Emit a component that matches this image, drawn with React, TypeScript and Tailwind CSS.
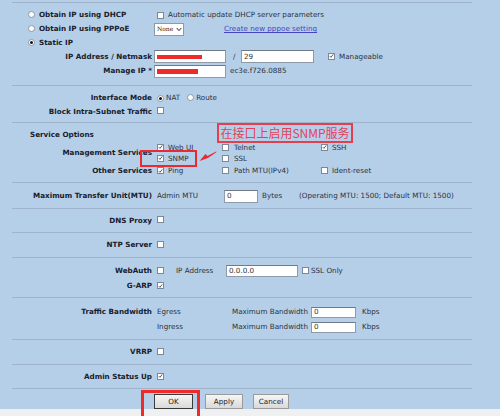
import type { ReactNode } from "react";

// small form controls drawn to the size used in the screenshot
function Check({ on = false }: { on?: boolean }) {
  return (
    <span className="inline-flex w-[7px] h-[7px] shrink-0 items-center justify-center border border-[#7d8896] bg-white">
      {on && (
        <svg viewBox="0 0 8 8" className="w-[6px] h-[6px]">
          <path d="M1.2 4.2 L3.1 6.2 L6.8 1.4" fill="none" stroke="#222" strokeWidth="1.2" />
        </svg>
      )}
    </span>
  );
}

function Radio({ on = false }: { on?: boolean }) {
  return (
    <span className="inline-flex w-[7px] h-[7px] shrink-0 items-center justify-center rounded-full border border-[#8d97a3] bg-white">
      {on && <span className="w-[3px] h-[3px] rounded-full bg-[#111]" />}
    </span>
  );
}

function Field({ w, h = "h-[13px]", children }: { w: string; h?: string; children?: ReactNode }) {
  return (
    <div className={`${w} ${h} shrink-0 flex items-center pl-[2px] bg-white border border-[#8e9aa8] border-t-[#6f7a86] text-[#333]`}>
      {children}
    </div>
  );
}

function Line() {
  return (
    <div className="mx-[12px] w-[460px]">
      <div className="h-px bg-[#9fb3ca]" />
    </div>
  );
}

function Label({ children }: { children: ReactNode }) {
  return <div className="w-[152px] shrink-0 text-right font-bold text-[#18202c]">{children}</div>;
}

export default function App() {
  return (
    <div
      className="relative w-[500px] h-[416px] overflow-hidden bg-[#b6cfe9] text-[7.2px] leading-none text-[#2b323c] whitespace-nowrap flex flex-col"
      style={{ fontFamily: '"DejaVu Sans", Verdana, sans-serif' }}
    >
      <div className="h-[2px]" />
      <Line />

      {/* IP mode */}
      <div className="mt-[5px] flex flex-col">
        <div className="h-[14px] flex items-center">
          <div className="w-[157px] shrink-0 flex items-center gap-[4px] pl-[28px] font-bold text-[#18202c]">
            <Radio />
            <span>Obtain IP using DHCP</span>
          </div>
          <Check />
          <span className="ml-[4px]">Automatic update DHCP server parameters</span>
        </div>
        <div className="h-[14px] flex items-center">
          <div className="w-[154px] shrink-0 flex items-center gap-[4px] pl-[28px] font-bold text-[#18202c]">
            <Radio />
            <span>Obtain IP using PPPoE</span>
          </div>
          <div className="w-[30px] h-[13px] flex items-center justify-between pl-[2px] pr-[1px] bg-white border border-[#8e9aa8] text-[#222]">
            <span style={{ fontFamily: '"DejaVu Serif", serif' }} className="text-[6px]">None</span>
            <svg viewBox="0 0 8 6" className="w-[6px] h-[5px]">
              <path d="M1 1 L4 4.5 L7 1" fill="none" stroke="#222" strokeWidth="1.3" />
            </svg>
          </div>
          <span className="ml-[40px] text-[#4545c0] underline">Create new pppoe setting</span>
        </div>
        <div className="h-[13px] flex items-center">
          <div className="flex items-center gap-[4px] pl-[28px] font-bold text-[#18202c]">
            <Radio on />
            <span>Static IP</span>
          </div>
        </div>
        <div className="h-[15px] flex items-center">
          <Label>IP Address / Netmask</Label>
          <div className="ml-[2px]">
            <Field w="w-[72px]">
              <span className="w-[45px] h-[4px] bg-[#ee2b2b]" />
            </Field>
          </div>
          <span className="ml-[7px] w-[8px]">/</span>
          <Field w="w-[73px]">29</Field>
          <span className="ml-[14px]">
            <Check on />
          </span>
          <span className="ml-[4px]">Manageable</span>
        </div>
        <div className="h-[14px] flex items-center">
          <Label>Manage IP *</Label>
          <div className="ml-[2px]">
            <Field w="w-[72px]">
              <span className="w-[41px] h-[5px] bg-[#ee2b2b]" />
            </Field>
          </div>
          <span className="ml-[4px]">ec3e.f726.0885</span>
        </div>
      </div>
      <div className="h-[7px]" />
      <Line />

      {/* interface mode */}
      <div className="mt-[5px] flex flex-col">
        <div className="h-[14px] flex items-center">
          <Label>Interface Mode</Label>
          <span className="ml-[5px]">
            <Radio on />
          </span>
          <span className="ml-[2px]">NAT</span>
          <span className="ml-[7px]">
            <Radio />
          </span>
          <span className="ml-[2px]">Route</span>
        </div>
        <div className="h-[13px] flex items-center">
          <Label>Block Intra-Subnet Traffic</Label>
          <span className="ml-[5px]">
            <Check />
          </span>
        </div>
      </div>
      <div className="h-[4px]" />
      <Line />

      {/* services */}
      <div className="mt-[5px] flex flex-col">
        <div className="h-[14px] flex items-center pl-[30px] font-bold text-[#18202c]">Service Options</div>
        <div className="flex">
          <div className="w-[152px] shrink-0 h-[21px] flex items-center justify-end font-bold text-[#18202c]">Management Services</div>
          <div className="ml-[5px] grid grid-cols-[65px_99px_80px] grid-rows-[11px_11px] items-center">
            <div className="flex items-center gap-[4px]"><Check on />Web UI</div>
            <div className="flex items-center gap-[5px]"><Check />Telnet</div>
            <div className="flex items-center gap-[4px]"><Check on />SSH</div>
            <div className="flex items-center gap-[4px]"><Check on />SNMP</div>
            <div className="flex items-center gap-[5px]"><Check />SSL</div>
            <div />
          </div>
        </div>
        <div className="h-[14px] flex items-center">
          <Label>Other Services</Label>
          <div className="ml-[5px] grid grid-cols-[65px_99px_80px] items-center">
            <div className="flex items-center gap-[4px]"><Check on />Ping</div>
            <div className="flex items-center gap-[5px]"><Check />Path MTU(IPv4)</div>
            <div className="flex items-center gap-[4px]"><Check />Ident-reset</div>
          </div>
        </div>
      </div>
      <div className="h-[4px]" />
      <Line />

      {/* MTU */}
      <div className="mt-[6px] h-[14px] flex items-center">
        <Label>Maximum Transfer Unit(MTU)</Label>
        <span className="ml-[5px] w-[67px]">Admin MTU</span>
        <Field w="w-[34px]">0</Field>
        <span className="ml-[4px] w-[37px]">Bytes</span>
        <span>(Operating MTU: 1500; Default MTU: 1500)</span>
      </div>
      <div className="h-[5px]" />
      <Line />

      <div className="h-[23px] flex items-center">
        <Label>DNS Proxy</Label>
        <span className="ml-[5px]"><Check /></span>
      </div>
      <Line />

      <div className="h-[24px] flex items-center">
        <Label>NTP Server</Label>
        <span className="ml-[5px]"><Check /></span>
      </div>
      <Line />

      {/* web auth */}
      <div className="pt-[7px] pb-[5px] flex flex-col gap-[3px]">
        <div className="h-[12px] flex items-center">
          <Label>WebAuth</Label>
          <span className="ml-[5px]"><Check /></span>
          <span className="ml-[12px] w-[50px]">IP Address</span>
          <Field w="w-[72px]" h="h-[12px]">0.0.0.0</Field>
          <span className="ml-[4px]"><Check /></span>
          <span className="ml-[2px]">SSL Only</span>
        </div>
        <div className="h-[12px] flex items-center">
          <Label>G-ARP</Label>
          <span className="ml-[5px]"><Check on /></span>
        </div>
      </div>
      <Line />

      {/* bandwidth */}
      <div className="pt-[7px] pb-[5px] flex flex-col gap-[1px]">
        <div className="h-[14px] flex items-center">
          <Label>Traffic Bandwidth</Label>
          <span className="ml-[5px] w-[75px]">Egress</span>
          <span className="w-[79px]">Maximum Bandwidth</span>
          <Field w="w-[45px]" h="h-[11px]">0</Field>
          <span className="ml-[6px]">Kbps</span>
        </div>
        <div className="h-[14px] flex items-center">
          <div className="w-[152px] shrink-0" />
          <span className="ml-[5px] w-[75px]">Ingress</span>
          <span className="w-[79px]">Maximum Bandwidth</span>
          <Field w="w-[45px]" h="h-[11px]">0</Field>
          <span className="ml-[6px]">Kbps</span>
        </div>
      </div>
      <Line />

      <div className="h-[24px] flex items-center">
        <Label>VRRP</Label>
        <span className="ml-[5px]"><Check /></span>
      </div>
      <Line />

      <div className="h-[23px] flex items-center">
        <Label>Admin Status Up</Label>
        <span className="ml-[5px]"><Check on /></span>
      </div>
      <Line />

      {/* buttons */}
      <div className="h-[20px] flex items-end pl-[154px] text-[#222]">
        <button className="w-[39px] h-[15px] flex items-center justify-center bg-gradient-to-b from-[#f6f6f6] to-[#d9d9d9] border border-[#3a3a3a]">OK</button>
        <button className="ml-[12px] w-[38px] h-[15px] flex items-center justify-center bg-gradient-to-b from-[#f6f6f6] to-[#d9d9d9] border border-[#9a9a9a]">Apply</button>
        <button className="ml-[10px] w-[36px] h-[15px] flex items-center justify-center bg-gradient-to-b from-[#f6f6f6] to-[#d9d9d9] border border-[#9a9a9a]">Cancel</button>
      </div>
      <div className="flex-1 bg-[#eef0f2]" />

      {/* red annotations */}
      <div
        className="absolute left-[217px] top-[123px] w-[136px] h-[20px] flex items-center justify-center border-2 border-[#e2404e] text-[12px] text-[#e4405a]"
        style={{ fontFamily: '"Noto Sans CJK SC", "Noto Sans", sans-serif' }}
      >
        在接口上启用SNMP服务
      </div>
      <div className="absolute left-[140px] top-[150px] w-[57px] h-[17px] border-[2.5px] border-[#ea2a33]" />
      <svg className="absolute left-[198px] top-[148px] w-[20px] h-[15px]" viewBox="0 0 20 15">
        <polygon points="1.5,13 7.5,6 9.5,8 18.5,3.2 18,4.6 10,10" fill="#ea2a33" />
      </svg>
      <div className="absolute left-[141px] top-[390px] w-[59px] h-[30px] border-[3px] border-[#ee2a2a]" />
    </div>
  );
}
